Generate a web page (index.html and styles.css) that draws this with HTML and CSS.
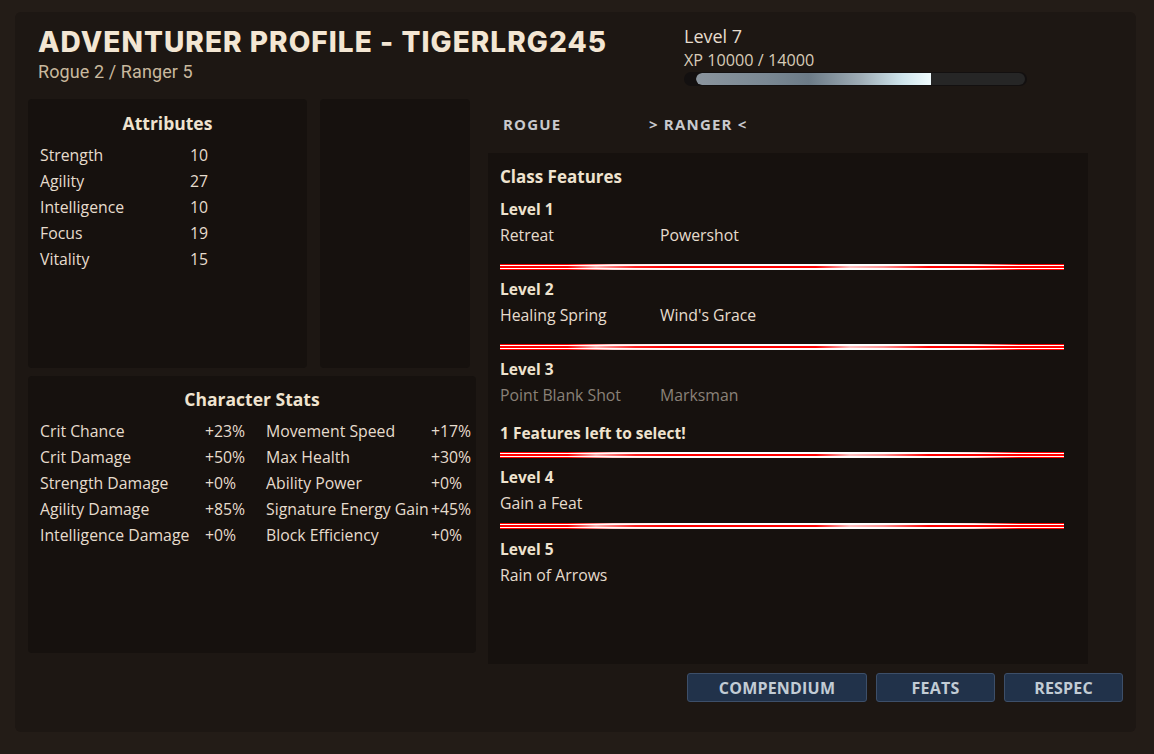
FILE: index.html
```html
<!DOCTYPE html>
<html lang="en">
<head>
<meta charset="utf-8">
<title>Adventurer Profile</title>
<link rel="stylesheet" href="styles.css">
</head>
<body>
<div class="frame">
  <header class="top">
    <div class="title-block">
      <h1 class="title">ADVENTURER PROFILE - TIGERLRG245</h1>
      <div class="classes">Rogue 2 / Ranger 5</div>
    </div>
    <div class="level-block">
      <div class="lvl">Level 7</div>
      <div class="xp">XP 10000 / 14000</div>
      <div class="bar"><div class="track"><div class="fill" style="width:71.43%"></div></div></div>
    </div>
  </header>

  <div class="main">
    <div class="left">
      <div class="row-top">
        <section class="panel attrs">
          <h2 class="panel-title">Attributes</h2>
          <div class="attr-grid">
            <span>Strength</span><span>10</span>
            <span>Agility</span><span>27</span>
            <span>Intelligence</span><span>10</span>
            <span>Focus</span><span>19</span>
            <span>Vitality</span><span>15</span>
          </div>
        </section>
        <section class="panel empty"></section>
      </div>
      <section class="panel stats">
        <h2 class="panel-title stats-title">Character Stats</h2>
        <div class="stat-grid">
          <span>Crit Chance</span><span>+23%</span><span>Movement Speed</span><span>+17%</span>
          <span>Crit Damage</span><span>+50%</span><span>Max Health</span><span>+30%</span>
          <span>Strength Damage</span><span>+0%</span><span>Ability Power</span><span>+0%</span>
          <span>Agility Damage</span><span>+85%</span><span>Signature Energy Gain</span><span>+45%</span>
          <span>Intelligence Damage</span><span>+0%</span><span>Block Efficiency</span><span>+0%</span>
        </div>
      </section>
    </div>

    <div class="right">
      <nav class="tabs">
        <span class="tab">ROGUE</span>
        <span class="tab">&gt; RANGER &lt;</span>
      </nav>
      <section class="features">
        <h2 class="feat-title">Class Features</h2>
        <div class="level first">
          <div class="level-head">Level 1</div>
          <div class="items"><span>Retreat</span><span>Powershot</span></div>
        </div>
        <div class="sep sep-a"></div>
        <div class="level">
          <div class="level-head">Level 2</div>
          <div class="items"><span>Healing Spring</span><span>Wind's Grace</span></div>
        </div>
        <div class="sep sep-a"></div>
        <div class="level">
          <div class="level-head">Level 3</div>
          <div class="items muted"><span>Point Blank Shot</span><span>Marksman</span></div>
          <div class="notice">1 Features left to select!</div>
        </div>
        <div class="sep sep-b"></div>
        <div class="level">
          <div class="level-head">Level 4</div>
          <div class="items"><span>Gain a Feat</span></div>
        </div>
        <div class="sep sep-c"></div>
        <div class="level">
          <div class="level-head">Level 5</div>
          <div class="items"><span>Rain of Arrows</span></div>
        </div>
      </section>
    </div>
  </div>

  <div class="actions">
    <button class="btn wide">COMPENDIUM</button>
    <button class="btn">FEATS</button>
    <button class="btn">RESPEC</button>
  </div>
</div>
</body>
</html>
```

FILE: styles.css
```css
* { box-sizing: border-box; }

html, body {
  margin: 0;
  padding: 0;
  background: #231c17;
  width: 1154px;
  height: 754px;
  overflow: hidden;
}

body {
  font-family: "Open Sans", "Noto Sans", sans-serif;
  color: #e6dccd;
}

.frame {
  margin: 12px 0 0 15px;
  width: 1121px;
  height: 720px;
  background: #1d1713;
  border-radius: 6px;
}

.top {
  display: flex;
  height: 87px;
}

.title-block {
  width: 669px;
  padding: 15px 0 0 23px;
}

.title {
  margin: 0;
  font-family: "Inter", "Lato", sans-serif;
  font-weight: 800;
  font-size: 28px;
  line-height: 30px;
  letter-spacing: 1.05px;
  color: #f3e6d3;
  white-space: nowrap;
}

.classes {
  margin-top: 4px;
  font-family: "Roboto", sans-serif;
  font-size: 18px;
  line-height: 22px;
  letter-spacing: 0.1px;
  color: #c9b99e;
}

.level-block {
  padding-top: 12px;
  width: 343px;
}

.lvl {
  font-size: 18px;
  line-height: 24px;
  color: #e6dccd;
}

.xp {
  margin-top: 1px;
  font-size: 16.2px;
  line-height: 22px;
  color: #d8ccb8;
}

.bar {
  margin-top: 1px;
  height: 14px;
  background: #131010;
  border-radius: 7px;
  padding: 1px 2px 1px 12px;
}

.track {
  height: 12px;
  background: #262626;
  border-radius: 6px;
  overflow: hidden;
}

.fill {
  height: 100%;
  border-radius: 6px 0 0 6px;
  background: linear-gradient(to right, #8b959e 0%, #7a8893 30%, #6c7b87 48%, #9eacb5 70%, #cfe5ec 88%, #f0fbfd 100%);
}

.main {
  display: flex;
  gap: 12px;
  padding: 0 13px;
}

.left {
  width: 448px;
}

.row-top {
  display: flex;
  gap: 13px;
  height: 269px;
}

.panel {
  background: #16110e;
  border-radius: 4px;
}

.attrs {
  width: 279px;
  padding: 12px 12px 0 12px;
}

.empty {
  width: 150px;
}

.panel-title {
  margin: 0 0 7px 0;
  text-align: center;
  font-size: 17.5px;
  line-height: 24px;
  font-weight: 700;
  color: #efe3cf;
}

.attr-grid {
  display: grid;
  grid-template-columns: 150px auto;
  font-size: 15.8px;
  line-height: 26px;
}

.stats {
  margin-top: 8px;
  height: 277px;
  padding: 11px 0 0 12px;
}

.stats-title {
  padding-right: 12px;
}

.stat-grid {
  display: grid;
  grid-template-columns: 165px 61px 165px auto;
  font-size: 15.8px;
  line-height: 26px;
  white-space: nowrap;
}

.right {
  width: 600px;
}

.tabs {
  display: flex;
  height: 54px;
  align-items: center;
  padding: 0 0 4px 15px;
}

.tab {
  width: 146px;
  font-weight: 700;
  font-size: 15px;
  letter-spacing: 1.2px;
  color: #c9c9cd;
}

.features {
  height: 511px;
  background: #16110e;
  padding: 12px 24px 0 12px;
}

.feat-title {
  margin: 0;
  font-size: 17px;
  line-height: 24px;
  font-weight: 700;
  color: #efe3cf;
}

.level.first {
  margin-top: 7px;
}

.level-head {
  font-weight: 700;
  font-size: 15.5px;
  line-height: 26px;
  color: #efe3cf;
}

.items {
  display: flex;
  font-size: 15.8px;
  line-height: 26px;
}

.items span {
  width: 160px;
  white-space: nowrap;
}

.items.muted {
  color: #8a8178;
}

.notice {
  margin-top: 12px;
  font-weight: 700;
  font-size: 15.5px;
  line-height: 26px;
  color: #efe3cf;
}

.sep {
  height: 6px;
  background:
    linear-gradient(to right, #ff0000 0%, #ff0000 12%, #ffd0d0 20%, #ffffff 30%, #ffffff 78%, #ffd0d0 84%, #ff0000 92%, #ff0000 100%) top / 100% 1px no-repeat,
    linear-gradient(to right, #ff0000 0%, #ff0000 12%, #ffd0d0 20%, #ffffff 30%, #ffffff 78%, #ffd0d0 84%, #ff0000 92%, #ff0000 100%) bottom / 100% 1px no-repeat,
    linear-gradient(to right, #ff0000 0%, #ff0000 12%, #ffb0b0 17%, #ff2020 24%, #ff0000 30%, #ff0000 56%, #ffc0c0 62%, #ff9090 68%, #ff0000 76%, #ff0000 100%) center / 100% 2px no-repeat,
    #ffffff;
}

.sep-a { margin: 16px 0 6px 0; }
.sep-b { margin: 6px 0 6px 0; }
.sep-c { margin: 7px 0 7px 0; }

.actions {
  display: flex;
  justify-content: flex-end;
  gap: 9px;
  margin-top: 9px;
  padding-right: 13px;
}

.btn {
  width: 119px;
  height: 29px;
  padding: 0;
  background: #21324a;
  border: 1px solid #3d4f69;
  border-radius: 3px;
  font-family: "Open Sans", "Noto Sans", sans-serif;
  font-weight: 700;
  font-size: 16px;
  color: #c2ccd5;
  letter-spacing: 0.2px;
}

.btn.wide {
  width: 180px;
}
```
